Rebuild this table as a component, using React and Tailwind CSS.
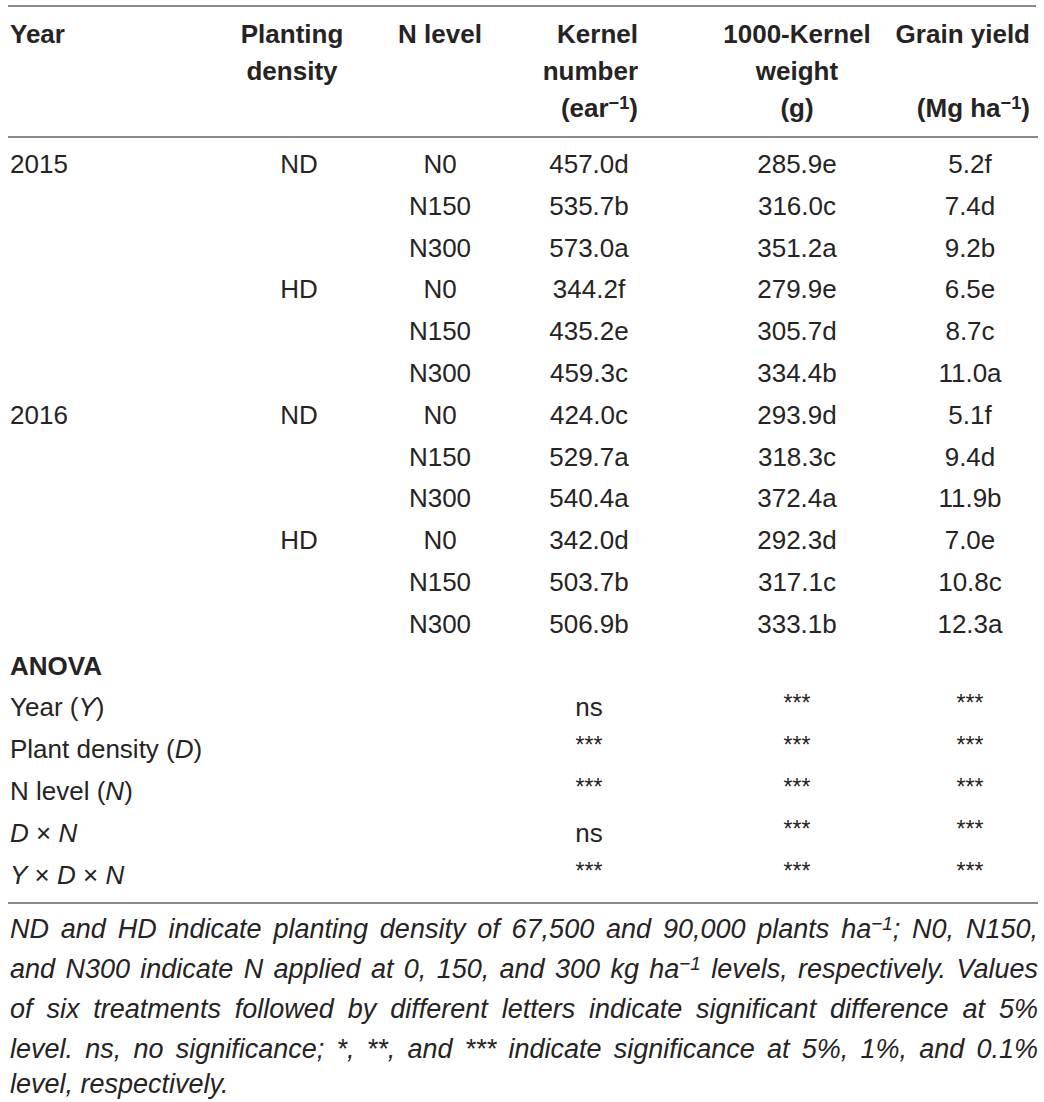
// Table: kernel number, 1000-kernel weight and grain yield by year, density and N level
const rows = [
  ["2015", "ND", "N0", "457.0d", "285.9e", "5.2f"],
  ["", "", "N150", "535.7b", "316.0c", "7.4d"],
  ["", "", "N300", "573.0a", "351.2a", "9.2b"],
  ["", "HD", "N0", "344.2f", "279.9e", "6.5e"],
  ["", "", "N150", "435.2e", "305.7d", "8.7c"],
  ["", "", "N300", "459.3c", "334.4b", "11.0a"],
  ["2016", "ND", "N0", "424.0c", "293.9d", "5.1f"],
  ["", "", "N150", "529.7a", "318.3c", "9.4d"],
  ["", "", "N300", "540.4a", "372.4a", "11.9b"],
  ["", "HD", "N0", "342.0d", "292.3d", "7.0e"],
  ["", "", "N150", "503.7b", "317.1c", "10.8c"],
  ["", "", "N300", "506.9b", "333.1b", "12.3a"],
];

const anova = [
  [<>Year (<i>Y</i>)</>, "ns", "***", "***"],
  [<>Plant density (<i>D</i>)</>, "***", "***", "***"],
  [<>N level (<i>N</i>)</>, "***", "***", "***"],
  [<><i>D</i> × <i>N</i></>, "ns", "***", "***"],
  [<><i>Y</i> × <i>D</i> × <i>N</i></>, "***", "***", "***"],
];

const cols = "grid grid-cols-[210px_152px_136px_162px_230px_136px]";

function Sig({ v }) {
  if (v === "***")
    return <span className="inline-block leading-none text-[23px] relative -top-[5px]">***</span>;
  return <span>{v}</span>;
}

function Sup({ children }) {
  return <sup className="text-[0.7em] leading-none relative -top-[0.45em]">{children}</sup>;
}

export default function App() {
  return (
    <div className="w-[1044px] h-[1102px] bg-white text-[#262324] font-['Liberation_Sans',Arial,sans-serif] overflow-hidden">
      <div className="ml-[8px] w-[1028px] mt-[5px] border-t-2 border-[#8a8a8a]" />

      <div className={`${cols} ml-[10px] pt-[9px] pb-[9px] text-[26px] leading-[37px] font-bold`}>
        <div>Year</div>
        <div className="text-center pr-[8px]">Planting<br />density</div>
        <div className="text-center">N level</div>
        <div className="flex flex-col items-end pr-[32px] whitespace-nowrap">
          <span>Kernel</span>
          <span>number</span>
          <span>(ear<Sup>−1</Sup>)</span>
        </div>
        <div className="text-center pl-[24px] whitespace-nowrap">1000-Kernel<br />weight<br />(g)</div>
        <div className="flex flex-col items-end pr-[6px] whitespace-nowrap">
          <span>Grain yield</span>
          <span>&nbsp;</span>
          <span>(Mg ha<Sup>−1</Sup>)</span>
        </div>
      </div>

      <div className="ml-[8px] w-[1030px] border-t-2 border-[#8a8a8a]" />

      <div className="ml-[10px] pt-[6px] pb-[6px] text-[26px] leading-[41.8px]">
        {rows.map((r, i) => (
          <div key={i} className={`${cols} h-[41.8px]`}>
            <div>{r[0]}</div>
            <div className="text-center pl-[6px]">{r[1]}</div>
            <div className="text-center">{r[2]}</div>
            <div className="text-center">{r[3]}</div>
            <div className="text-center pl-[24px]">{r[4]}</div>
            <div className="text-center pl-[4px]">{r[5]}</div>
          </div>
        ))}
        <div className={`${cols} h-[41.8px]`}>
          <div className="font-bold whitespace-nowrap">ANOVA</div>
        </div>
        {anova.map((r, i) => (
          <div key={i} className={`${cols} h-[41.8px]`}>
            <div className="col-span-3 whitespace-nowrap">{r[0]}</div>
            <div className="text-center"><Sig v={r[1]} /></div>
            <div className="text-center pl-[24px]"><Sig v={r[2]} /></div>
            <div className="text-center pl-[4px]"><Sig v={r[3]} /></div>
          </div>
        ))}
      </div>

      <div className="ml-[8px] w-[1030px] border-t-2 border-[#8a8a8a]" />

      <div className="ml-[10px] w-[1028px] pt-[5px] italic text-[27px] leading-[40px]">
        <div className="text-justify [text-align-last:justify] whitespace-nowrap">
          ND and HD indicate planting density of 67,500 and 90,000 plants ha<Sup>−1</Sup>; N0, N150,
        </div>
        <div className="text-justify [text-align-last:justify] whitespace-nowrap">
          and N300 indicate N applied at 0, 150, and 300 kg ha<Sup>−1</Sup> levels, respectively. Values
        </div>
        <div className="text-justify [text-align-last:justify] whitespace-nowrap">
          of six treatments followed by different letters indicate significant difference at 5%
        </div>
        <div className="text-justify [text-align-last:justify] whitespace-nowrap">
          level. ns, no significance; *, **, and *** indicate significance at 5%, 1%, and 0.1%
        </div>
        <div className="mt-[3px] leading-[24px]">level, respectively.</div>
      </div>
    </div>
  );
}
